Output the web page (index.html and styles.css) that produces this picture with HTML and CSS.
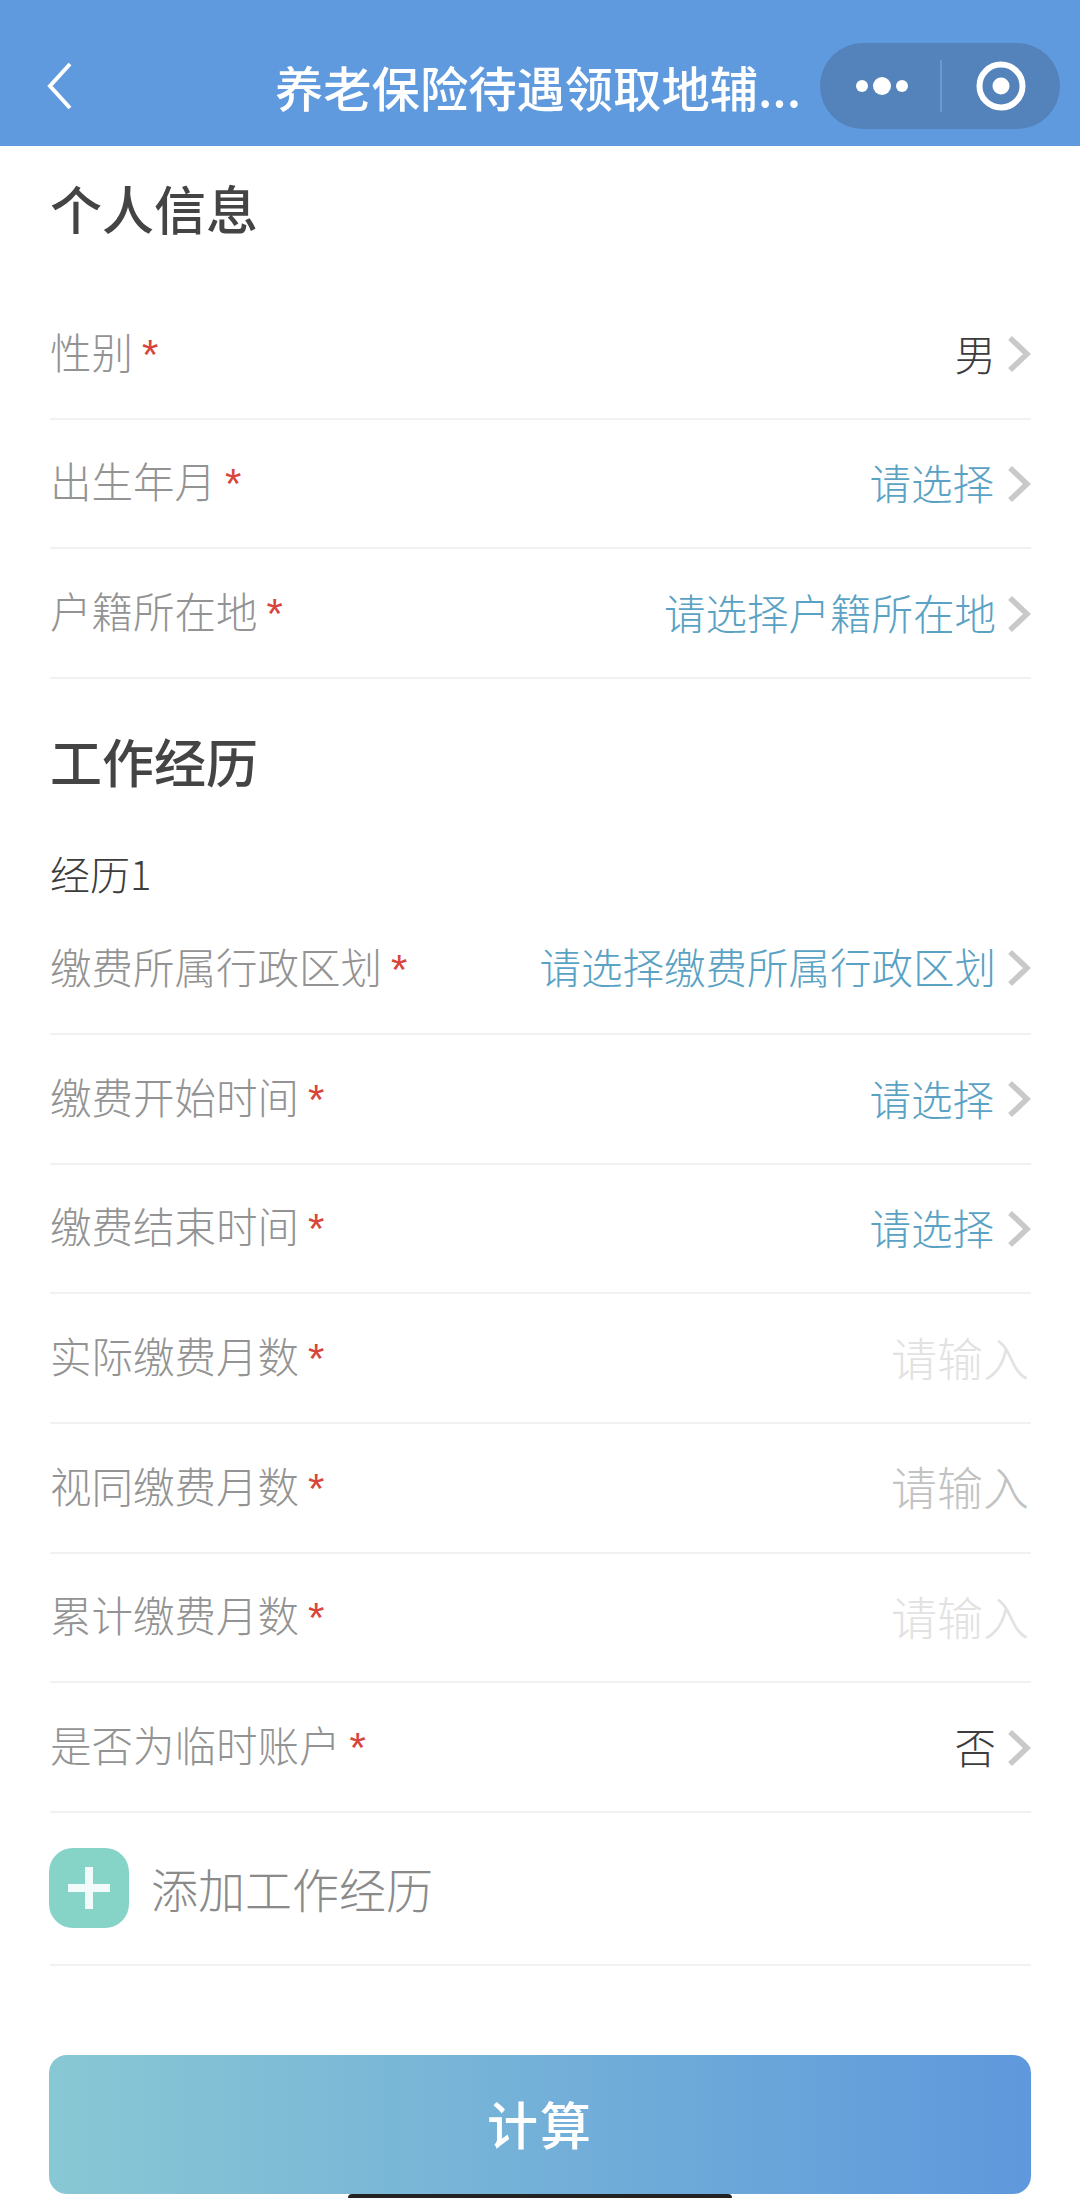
FILE: index.html
```html
<!DOCTYPE html>
<html lang="zh-CN">
<head>
<meta charset="utf-8">
<title>养老保险待遇领取地辅助计算</title>
<link rel="stylesheet" href="styles.css">
</head>
<body>
<div class="page">
  <header class="nav">
    <svg class="back" width="26" height="48" viewBox="0 0 26 48"><path d="M23 2 L3 24 L23 46" fill="none" stroke="#fff" stroke-width="4"/></svg>
    <div class="nav-title">养老保险待遇领取地辅...</div>
    <div class="capsule">
      <svg class="cap-dots" width="60" height="20" viewBox="0 0 60 20"><circle cx="10" cy="10" r="6" fill="#fff"/><circle cx="30" cy="10" r="9" fill="#fff"/><circle cx="50" cy="10" r="6" fill="#fff"/></svg>
      <span class="cap-line"></span>
      <svg class="cap-target" width="52" height="52" viewBox="0 0 52 52"><circle cx="26" cy="26" r="21.500" fill="none" stroke="#fff" stroke-width="6"/><circle cx="26" cy="26" r="8.500" fill="#fff"/></svg>
    </div>
  </header>

  <main class="content">
    <h2 class="section-title first">个人信息</h2>
    <div class="row"><span class="label">性别<i class="req">*</i></span><span class="value dark">男</span><svg class="chev" width="24" height="36" viewBox="0 0 24 36"><path d="M3 2 L20 18 L3 34" fill="none" stroke="#c9c9c9" stroke-width="5.500"/></svg></div>
    <div class="row"><span class="label">出生年月<i class="req">*</i></span><span class="value short">请选择</span><svg class="chev" width="24" height="36" viewBox="0 0 24 36"><path d="M3 2 L20 18 L3 34" fill="none" stroke="#c9c9c9" stroke-width="5.500"/></svg></div>
    <div class="row"><span class="label">户籍所在地<i class="req">*</i></span><span class="value">请选择户籍所在地</span><svg class="chev" width="24" height="36" viewBox="0 0 24 36"><path d="M3 2 L20 18 L3 34" fill="none" stroke="#c9c9c9" stroke-width="5.500"/></svg></div>

    <h2 class="section-title second">工作经历</h2>
    <div class="sub-title">经历1</div>
    <div class="row compact"><span class="label">缴费所属行政区划<i class="req">*</i></span><span class="value">请选择缴费所属行政区划</span><svg class="chev" width="24" height="36" viewBox="0 0 24 36"><path d="M3 2 L20 18 L3 34" fill="none" stroke="#c9c9c9" stroke-width="5.500"/></svg></div>
    <div class="row"><span class="label">缴费开始时间<i class="req">*</i></span><span class="value short">请选择</span><svg class="chev" width="24" height="36" viewBox="0 0 24 36"><path d="M3 2 L20 18 L3 34" fill="none" stroke="#c9c9c9" stroke-width="5.500"/></svg></div>
    <div class="row"><span class="label">缴费结束时间<i class="req">*</i></span><span class="value short">请选择</span><svg class="chev" width="24" height="36" viewBox="0 0 24 36"><path d="M3 2 L20 18 L3 34" fill="none" stroke="#c9c9c9" stroke-width="5.500"/></svg></div>
    <div class="row"><span class="label">实际缴费月数<i class="req">*</i></span><span class="value ph faint">请输入</span></div>
    <div class="row"><span class="label">视同缴费月数<i class="req">*</i></span><span class="value ph">请输入</span></div>
    <div class="row"><span class="label">累计缴费月数<i class="req">*</i></span><span class="value ph faint">请输入</span></div>
    <div class="row"><span class="label">是否为临时账户<i class="req">*</i></span><span class="value dark">否</span><svg class="chev" width="24" height="36" viewBox="0 0 24 36"><path d="M3 2 L20 18 L3 34" fill="none" stroke="#c9c9c9" stroke-width="5.500"/></svg></div>

    <div class="add-row">
      <span class="add-icon"><svg width="42" height="42" viewBox="0 0 42 42"><path d="M21 0 V42 M0 21 H42" stroke="#f2fbf9" stroke-width="8"/></svg></span>
      <span class="add-text">添加工作经历</span>
    </div>

    <button class="calc" type="button">计算</button>
  </main>
  <div class="home-bar"></div>
</div>
</body>
</html>
```

FILE: styles.css
```css
* { box-sizing: border-box; }
html, body { margin: 0; padding: 0; background: #fff; }
body { font-family: "Noto Sans CJK SC", "Noto Sans", sans-serif; }
.page { position: relative; width: 1080px; height: 2198px; overflow: hidden; background: #fff; }

.nav { height: 146px; background: #5f9ade; display: flex; align-items: center; padding: 0 20px 0 47px; }
.back { flex: none; margin-top: 26px; }
.nav-title { flex: none; width: 749px; padding-left: 202px; margin-top: 26px; font-size: 48.300px; line-height: 60px; font-weight: 500; color: #fff; white-space: nowrap; }
.capsule { flex: none; width: 240px; height: 86px; margin-top: 26px; margin-left: -2px; border-radius: 43px; background: #5482bb; display: flex; align-items: center; padding-left: 32px; }
.cap-dots { flex: none; }
.cap-line { flex: none; width: 2px; height: 52px; margin-left: 28px; background: #6c98cd; }
.cap-target { flex: none; margin-left: 33px; }

.content { padding: 0 49px 0 50px; }
.section-title { margin: 0; font-size: 52px; line-height: 72px; font-weight: 500; color: #444; }
.section-title.first { padding-top: 26px; margin-bottom: 46px; }
.section-title.second { margin-top: 46px; }

.row { height: 129.670px; display: flex; align-items: center; border-bottom: 2px solid #f1f1f1; padding-bottom: 2px; }
.row.compact { height: 137px; padding-top: 4px; }
.row.compact .label { margin-top: 3px; }
.label { flex: 1; font-size: 41.500px; line-height: 56px; color: #939393; font-weight: 300; }
.req { font-style: normal; color: #d8453c; margin-left: 9px; font-family: "Liberation Sans", sans-serif; font-size: 42px; }
.value { font-size: 41.500px; line-height: 56px; color: #5aa2c4; font-weight: 300; }
.value.short { margin-right: 2px; }
.value.dark { color: #3c3c3c; }
.value.ph { font-size: 46px; color: #c2c2c2; margin-right: 2px; margin-top: -3px; }
.value.ph.faint { color: #e2e2e2; }
.chev { flex: none; margin-left: 11px; margin-top: 3px; }

.sub-title { margin-top: 51px; font-size: 40px; line-height: 50px; color: #3c3c3c; font-weight: 300; }

.add-row { height: 153px; display: flex; align-items: center; border-bottom: 2px solid #f1f1f1; }
.add-icon { flex: none; width: 80px; height: 80px; border-radius: 24px; background: #85d4c7; display: flex; align-items: center; justify-content: center; margin-left: -1px; }
.add-icon svg { display: block; }
.add-text { margin-left: 22px; font-size: 47px; line-height: 60px; color: #8a8a8a; font-weight: 300; }

.calc { display: block; width: 982px; height: 139px; margin: 89px 0 0 -1px; padding-bottom: 4px; border: 0; border-radius: 18px; background: linear-gradient(90deg, #88c8d4, #5f98dc); color: #fff; font-family: inherit; font-size: 51px; font-weight: 500; letter-spacing: 2px; }

.home-bar { position: absolute; left: 348px; bottom: 0; width: 384px; height: 4px; border-radius: 4px 4px 0 0; background: #222; }
```
